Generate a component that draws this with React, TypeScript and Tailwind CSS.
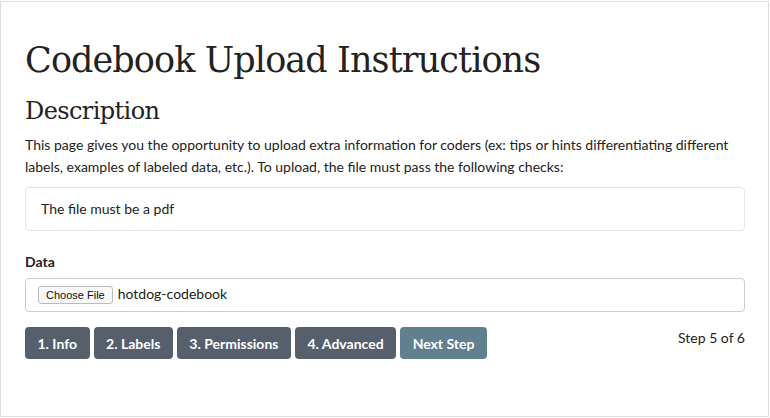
export default function App() {
  const steps = ["1. Info", "2. Labels", "3. Permissions", "4. Advanced"];

  return (
    <div className="h-[418px] w-[770px] bg-white pt-px font-['Lato',sans-serif] text-[#222]">
      <div className="h-[416px] w-[769px] border border-[#dddddd] pl-6 pr-[23px] pt-[38px]">
        <h1 className="font-['DejaVu_Serif',serif] text-[35px] leading-[40px] tracking-[-0.9px] text-[#222]">
          Codebook Upload Instructions
        </h1>
        <h2 className="mt-[17px] font-['DejaVu_Serif',serif] text-[24px] leading-[28px] tracking-[-0.6px] text-[#222]">
          Description
        </h2>
        <p className="mt-[9px] text-[14px] leading-[22px]">
          This page gives you the opportunity to upload extra information for coders (ex: tips or hints differentiating different
          labels, examples of labeled data, etc.). To upload, the file must pass the following checks:
        </p>
        <div className="mt-[9px] h-[44px] rounded border border-[#e3e3e3] px-[15px] py-[11px] text-[14px] leading-[20px]">
          The file must be a pdf
        </div>
        <label className="mt-[21px] block text-[14px] font-bold leading-[20px]">Data</label>
        <div className="mt-[6px] flex h-[34px] items-center gap-[5px] rounded border border-[#cccccc] px-3">
          <span className="rounded-[3px] border border-[#bbbbbb] bg-[#f8f8f8] px-[7px] font-['Liberation_Sans',sans-serif] text-[11px] leading-[16px] text-[#111]">
            Choose File
          </span>
          <span className="-mt-[3px] text-[14px] leading-[20px]">hotdog-codebook</span>
        </div>
        <div className="mt-[15px] flex items-start">
          <div className="flex gap-1">
            {steps.map((s) => (
              <button
                key={s}
                type="button"
                className="h-8 rounded bg-[#56606d] px-[12.5px] text-[14px] font-bold text-white"
              >
                {s}
              </button>
            ))}
            <button
              type="button"
              className="h-8 rounded bg-[#61808f] px-[12.5px] text-[14px] font-bold text-white"
            >
              Next Step
            </button>
          </div>
          <span className="ml-auto mt-[1px] text-[14px] leading-[20px]">Step 5 of 6</span>
        </div>
      </div>
    </div>
  );
}
